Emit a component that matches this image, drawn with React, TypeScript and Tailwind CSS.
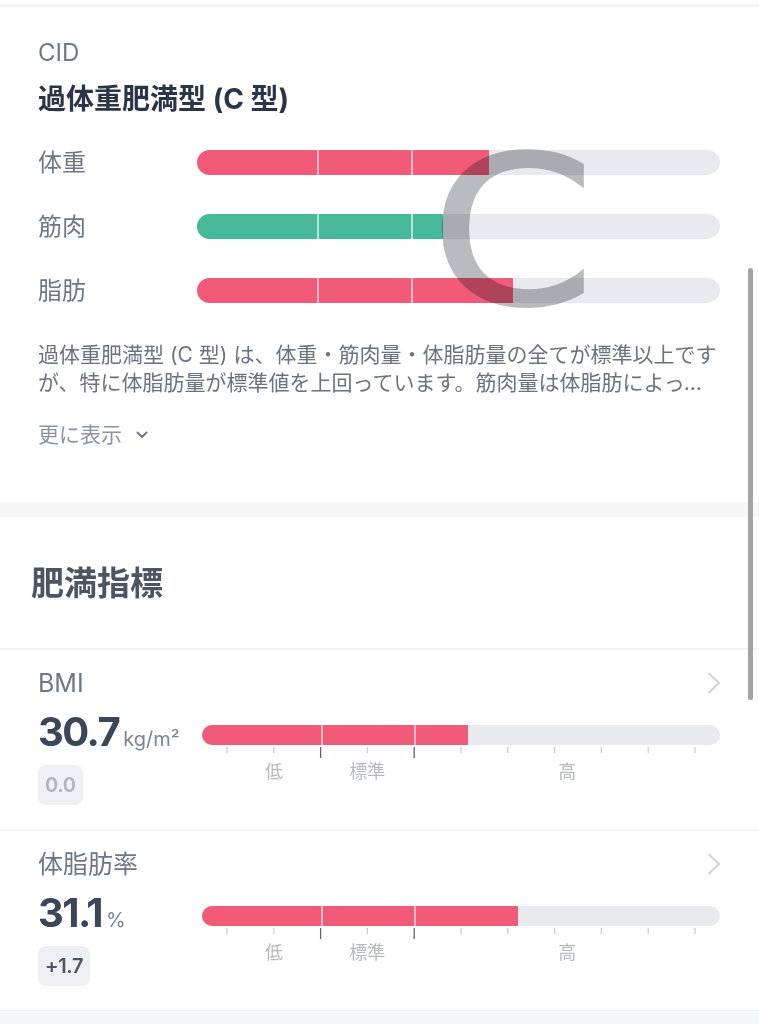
import React from "react";

type BarRow = { label: string; fill: number; fillClass: string };

const typeRows: BarRow[] = [
  { label: "体重", fill: 292, fillClass: "bg-[#f15b78]" },
  { label: "筋肉", fill: 246, fillClass: "bg-[#47b997]" },
  { label: "脂肪", fill: 316, fillClass: "bg-[#f15b78]" },
];

const ticks = Array.from({ length: 11 }, (_, i) => ({
  x: ((25 + 46.8 * i) / 518) * 100,
  major: i === 2 || i === 4,
}));

function ChevronRight() {
  return (
    <svg width="14" height="22" viewBox="0 0 14 22" fill="none" className="mr-[-1px]">
      <path d="M2 1.5 L12 11 L2 20.5" stroke="#cfd1d5" strokeWidth="2" strokeLinecap="round" strokeLinejoin="round" />
    </svg>
  );
}

function TypeBar({ row }: { row: BarRow }) {
  return (
    <div className="flex h-[25px] items-center">
      <span className="w-[159px] text-[24px] leading-none text-[#6e7787]">{row.label}</span>
      <div className="h-[25px] flex-1 overflow-hidden rounded-full bg-[#e9eaee]">
        <div className={`relative h-full ${row.fillClass}`} style={{ width: row.fill }}>
          <div className="absolute left-[120px] top-0 h-full w-[1.5px] bg-white/60" />
          <div className="absolute left-[214px] top-0 h-full w-[1.5px] bg-white/60" />
        </div>
      </div>
    </div>
  );
}

function Metric({
  title,
  value,
  unit,
  badge,
  badgeClass,
  fill,
}: {
  title: string;
  value: string;
  unit: string;
  badge: string;
  badgeClass: string;
  fill: number;
}) {
  return (
    <div className="border-t-2 border-[#f1f2f4] pb-[24px] pl-[38px] pr-[39px] pt-[18px]">
      <div className="flex h-[30px] items-center justify-between">
        <span className="text-[25px] leading-[30px] text-[#6e7787]">{title}</span>
        <ChevronRight />
      </div>
      <div className="mt-[10px] flex">
        <div className="w-[164px]">
          <div className="flex h-[48px] items-baseline">
            <span className="text-[40px] font-bold leading-[48px] tracking-[-1.5px] text-[#3b465a]">{value}</span>
            <span className="ml-[4px] text-[20px] text-[#7a8494]">{unit}</span>
          </div>
          <div
            className={`mt-[9px] inline-flex h-[40px] items-center rounded-[8px] bg-[#eff0f3] px-[7px] text-[20px] font-semibold tracking-[-0.3px] ${badgeClass}`}
          >
            {badge}
          </div>
        </div>
        <div className="flex-1 pt-[17px]">
          <div className="h-[20px] overflow-hidden rounded-full bg-[#e9eaee]">
            <div className="relative h-full bg-[#f15b78]" style={{ width: fill }}>
              <div className="absolute left-[119px] top-0 h-full w-[1.5px] bg-white/60" />
              <div className="absolute left-[212px] top-0 h-full w-[1.5px] bg-white/60" />
            </div>
          </div>
          <svg className="mt-[2px] block h-[11px] w-full">
            {ticks.map((t, i) => (
              <line
                key={i}
                x1={`${t.x}%`}
                x2={`${t.x}%`}
                y1="0"
                y2={t.major ? 11 : 6}
                stroke={t.major ? "#5d6572" : "#c9cdd3"}
                strokeWidth="1.3"
              />
            ))}
          </svg>
          <div className="relative mt-[3px] h-[22px] text-[18px] leading-[22px] text-[#b4b9c1]">
            <span className="absolute left-[13.9%] -translate-x-1/2">低</span>
            <span className="absolute left-[31.9%] -translate-x-1/2">標準</span>
            <span className="absolute left-[70.5%] -translate-x-1/2">高</span>
          </div>
        </div>
      </div>
    </div>
  );
}

export default function App() {
  return (
    <div className="relative min-h-[1024px] w-full overflow-hidden bg-white font-['Inter','Noto_Sans_CJK_JP',sans-serif]">
      <div className="h-[4px] bg-white" />
      <div className="h-[3px] bg-[#f3f4f6]" />

      {/* CID type */}
      <div className="pb-[53px] pl-[38px] pr-[39px] pt-[32px]">
        <div className="text-[24px] leading-[28px] text-[#6e7787]">CID</div>
        <div className="mt-[14px] text-[28px] font-bold leading-[36px] text-[#2b3548]">過体重肥満型 (C 型)</div>

        <div className="relative mt-[33px] flex flex-col gap-[39px]">
          {typeRows.map((r) => (
            <TypeBar key={r.label} row={r} />
          ))}
          <span className="pointer-events-none absolute left-[392px] top-[-20px] origin-left scale-x-[1.15] font-['DejaVu_Sans',sans-serif] text-[206px] leading-none text-[#b9bbbe] mix-blend-multiply [-webkit-text-stroke:2px_#b9bbbe]">
            C
          </span>
        </div>

        <p className="mt-[38px] line-clamp-2 text-[21px] leading-[28px] text-[#6b7280]">
          過体重肥満型 (C 型) は、体重・筋肉量・体脂肪量の全てが標準以上ですが、特に体脂肪量が標準値を上回っています。筋肉量は体脂肪によって隠れている可能性があるため、食事と運動で体脂肪を減らしましょう。
        </p>

        <div className="mt-[24px] flex h-[28px] items-center gap-[14px] text-[21px] text-[#8b94a3]">
          <span>更に表示</span>
          <svg width="12" height="8" viewBox="0 0 12 8" fill="none">
            <path d="M1.5 1.5 L6 6 L10.5 1.5" stroke="#6e7787" strokeWidth="2" strokeLinecap="round" strokeLinejoin="round" />
          </svg>
        </div>
      </div>

      <div className="h-[15px] bg-[#f6f7f9]" />

      {/* Obesity indicators */}
      <div className="pb-[45px] pl-[31px] pt-[46px]">
        <h2 className="text-[33px] font-bold leading-[40px] text-[#4d5562]">肥満指標</h2>
      </div>

      <Metric title="BMI" value="30.7" unit="kg/m²" badge="0.0" badgeClass="text-[#aeb3bc]" fill={266} />
      <Metric title="体脂肪率" value="31.1" unit="%" badge="+1.7" badgeClass="text-[#4a5568]" fill={316} />

      <div className="h-[14px] border-t border-[#eeeff2] bg-[#f6f7f9]" />

      {/* scroll indicator */}
      <div className="absolute left-[748px] top-[268px] h-[432px] w-[5px] rounded-full bg-[#a3a3a3]" />
    </div>
  );
}
